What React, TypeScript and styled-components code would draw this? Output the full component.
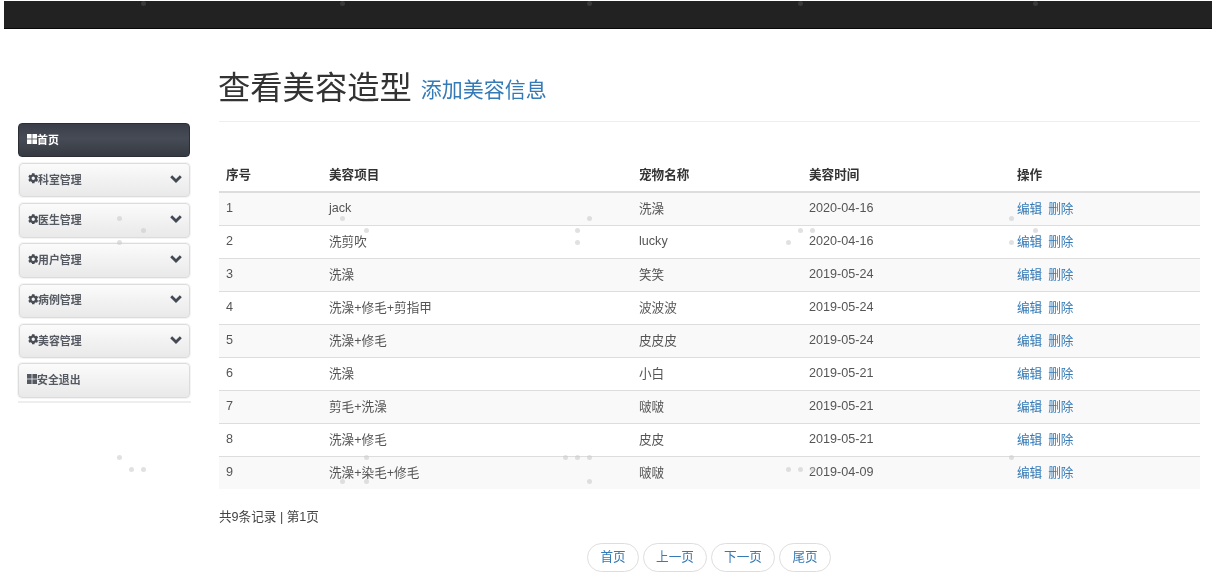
import React from "react";
import styled, { createGlobalStyle } from "styled-components";
import { FaCog } from "react-icons/fa";

const Global = createGlobalStyle`
  html, body { margin: 0; padding: 0; background: #fff; }
  body {
    font-family: "Liberation Sans", "Noto Sans CJK SC", sans-serif;
    font-size: 12.6px;
    color: #444;
  }
`;

const Page = styled.div`
  position: relative;
  width: 1214px;
  height: 587px;
  overflow: hidden;
  padding-top: 1px;
  box-sizing: border-box;
  filter: blur(0.35px);
`;

const TopBar = styled.div`
  height: 27px;
  margin: 0 2px 0 4px;
  background: #222;
  border-bottom: 1px solid #080808;
`;

const Body = styled.div`
  display: flex;
  align-items: flex-start;
  padding-left: 18px;
`;

const Sidebar = styled.nav`
  width: 173px;
  margin-top: 94px;
  display: flex;
  flex-direction: column;
  border-bottom: 2px solid #eee;
  padding-bottom: 3px;
`;

const NavItem = styled.div<{ $variant: "active" | "group" | "plain" }>`
  display: flex;
  align-items: center;
  justify-content: space-between;
  box-sizing: border-box;
  height: ${(p) => (p.$variant === "group" ? "34.3px" : p.$variant === "plain" ? "35px" : "34.05px")};
  margin: ${(p) =>
    p.$variant === "group" ? "5.95px 1.5px 0 1px" : p.$variant === "plain" ? "4.7px 1px 0 0" : "0 1px 0 0"};
  padding: 0 ${(p) => (p.$variant === "group" ? "7px" : "8px")} 3px 8px;
  border-radius: 4px;
  font-weight: 700;
  font-size: 10.9px;
  color: ${(p) => (p.$variant === "active" ? "#fff" : "#555962")};
  background: ${(p) =>
    p.$variant === "active"
      ? "linear-gradient(#3a3e48, #464b55 45%, #363a43)"
      : "linear-gradient(#fbfbfb, #e9e9e9)"};
  border: 1px solid ${(p) => (p.$variant === "active" ? "#2b2e35" : "#dcdcdc")};
  box-shadow: ${(p) => (p.$variant === "active" ? "none" : "0 0 0 1px #f4f4f4")};
`;

const NavLabel = styled.span`
  display: flex;
  align-items: center;
`;

const ChevronIcon = styled.svg`
  width: 12px;
  height: 12px;
  display: block;
  color: #434a54;
`;

const Cog = styled(FaCog)`
  width: 10.5px;
  height: 10.5px;
  margin-right: -0.5px;
  color: #484c55;
`;

const Squares = styled.svg`
  width: 10px;
  height: 10px;
  display: block;
`;

const Main = styled.main`
  width: 981px;
  margin-left: 28px;
`;

const Heading = styled.div`
  display: flex;
  align-items: flex-end;
  height: 93px;
  box-sizing: border-box;
  padding-top: 37px;
  border-bottom: 1px solid #eee;
`;

const Title = styled.h1`
  margin: 0 0 11px -1px;
  font-size: 32.3px;
  line-height: 44px;
  font-weight: 400;
  color: #333;
`;

const AddLink = styled.a`
  margin: 0 0 17px 9px;
  font-size: 21px;
  line-height: 28px;
  color: #337ab7;
  text-decoration: none;
`;

const Table = styled.table`
  width: 981px;
  margin-top: 34px;
  border-collapse: collapse;
  table-layout: fixed;
`;

const HeadCell = styled.th`
  height: 36px;
  box-sizing: border-box;
  padding: 0 7px;
  font-weight: 700;
  font-size: 12.6px;
  text-align: left;
  color: #333;
  border-bottom: 2px solid #ddd;
`;

const Row = styled.tr`
  &:nth-child(odd) {
    background: #f9f9f9;
  }
`;

const Cell = styled.td`
  height: 33px;
  box-sizing: border-box;
  padding: 0 7px 2px;
  color: #555;
  border-top: 1px solid #ddd;
`;

const ActionLink = styled.a`
  color: #337ab7;
  text-decoration: none;
  margin-right: 6px;
`;

const Summary = styled.div`
  margin-top: 19px;
  line-height: 18px;
  color: #444;
`;

const Pager = styled.div`
  display: flex;
  gap: 4px;
  margin: 17px 0 0 368px;
`;

const PageButton = styled.a<{ $w: number }>`
  box-sizing: border-box;
  width: ${(p) => p.$w}px;
  height: 29px;
  line-height: 27px;
  text-align: center;
  border: 1px solid #ddd;
  border-radius: 15px;
  color: #337ab7;
  background: #fff;
  text-decoration: none;
`;

const Dot = styled.i<{ $x: number; $y: number; $dark?: boolean }>`
  position: absolute;
  left: ${(p) => p.$x - 2.5}px;
  top: ${(p) => p.$y - 2.5}px;
  width: 5px;
  height: 5px;
  border-radius: 50%;
  background: ${(p) => (p.$dark ? "#3a3a3a" : "rgba(200, 200, 200, 0.55)")};
`;

const topDots = [143, 342, 589, 800, 1035];
const dots: [number, number][] = [
  [119, 218], [143, 230], [119, 242], [342, 218], [366, 230], [589, 218], [577, 230], [577, 242],
  [800, 230], [812, 230], [788, 242], [1011, 218], [1035, 230], [1011, 242],
  [119, 457], [131, 469], [143, 469], [366, 457], [342, 481], [366, 481], [565, 457], [577, 457],
  [589, 457], [589, 481], [788, 469], [800, 469], [812, 469], [1011, 457],
];

const groups = ["科室管理", "医生管理", "用户管理", "病例管理", "美容管理"];
const columns: [string, number][] = [
  ["序号", 103], ["美容项目", 310], ["宠物名称", 170], ["美容时间", 208], ["操作", 190],
];
const rows = [
  ["1", "jack", "洗澡", "2020-04-16"],
  ["2", "洗剪吹", "lucky", "2020-04-16"],
  ["3", "洗澡", "笑笑", "2019-05-24"],
  ["4", "洗澡+修毛+剪指甲", "波波波", "2019-05-24"],
  ["5", "洗澡+修毛", "皮皮皮", "2019-05-24"],
  ["6", "洗澡", "小白", "2019-05-21"],
  ["7", "剪毛+洗澡", "啵啵", "2019-05-21"],
  ["8", "洗澡+修毛", "皮皮", "2019-05-21"],
  ["9", "洗澡+染毛+修毛", "啵啵", "2019-04-09"],
];
const pages: [string, number][] = [["首页", 52], ["上一页", 64], ["下一页", 64], ["尾页", 52]];

const Grid = () => (
  <Squares viewBox="0 0 10 10" fill="currentColor">
    <rect x="0" y="0" width="4.6" height="4.6" />
    <rect x="5.4" y="0" width="4.6" height="4.6" />
    <rect x="0" y="5.4" width="4.6" height="4.6" />
    <rect x="5.4" y="5.4" width="4.6" height="4.6" />
  </Squares>
);

const Chevron = () => (
  <ChevronIcon viewBox="0 0 12 12" fill="none" stroke="currentColor" strokeWidth="2.8">
    <polyline points="1.2,3.2 6,8 10.8,3.2" />
  </ChevronIcon>
);

export default function App() {
  return (
    <Page>
      <Global />
      <TopBar />
      <Body>
        <Sidebar>
          <NavItem $variant="active">
            <NavLabel><Grid />首页</NavLabel>
          </NavItem>
          {groups.map((g) => (
            <NavItem $variant="group" key={g}>
              <NavLabel><Cog />{g}</NavLabel>
              <Chevron />
            </NavItem>
          ))}
          <NavItem $variant="plain">
            <NavLabel><Grid />安全退出</NavLabel>
          </NavItem>
        </Sidebar>
        <Main>
          <Heading>
            <Title>查看美容造型</Title>
            <AddLink href="#">添加美容信息</AddLink>
          </Heading>
          <Table>
            <colgroup>
              {columns.map(([name, w]) => <col key={name} width={w} />)}
            </colgroup>
            <thead>
              <tr>
                {columns.map(([name]) => <HeadCell key={name}>{name}</HeadCell>)}
              </tr>
            </thead>
            <tbody>
              {rows.map((r) => (
                <Row key={r[0]}>
                  {r.map((c, i) => <Cell key={i}>{c}</Cell>)}
                  <Cell>
                    <ActionLink href="#">编辑</ActionLink>
                    <ActionLink href="#">删除</ActionLink>
                  </Cell>
                </Row>
              ))}
            </tbody>
          </Table>
          <Summary>共9条记录 | 第1页</Summary>
          <Pager>
            {pages.map(([label, w]) => <PageButton href="#" key={label} $w={w}>{label}</PageButton>)}
          </Pager>
        </Main>
      </Body>
      {topDots.map((x) => <Dot key={x} $x={x} $y={3} $dark />)}
      {dots.map(([x, y]) => <Dot key={`${x}-${y}`} $x={x} $y={y} />)}
    </Page>
  );
}
